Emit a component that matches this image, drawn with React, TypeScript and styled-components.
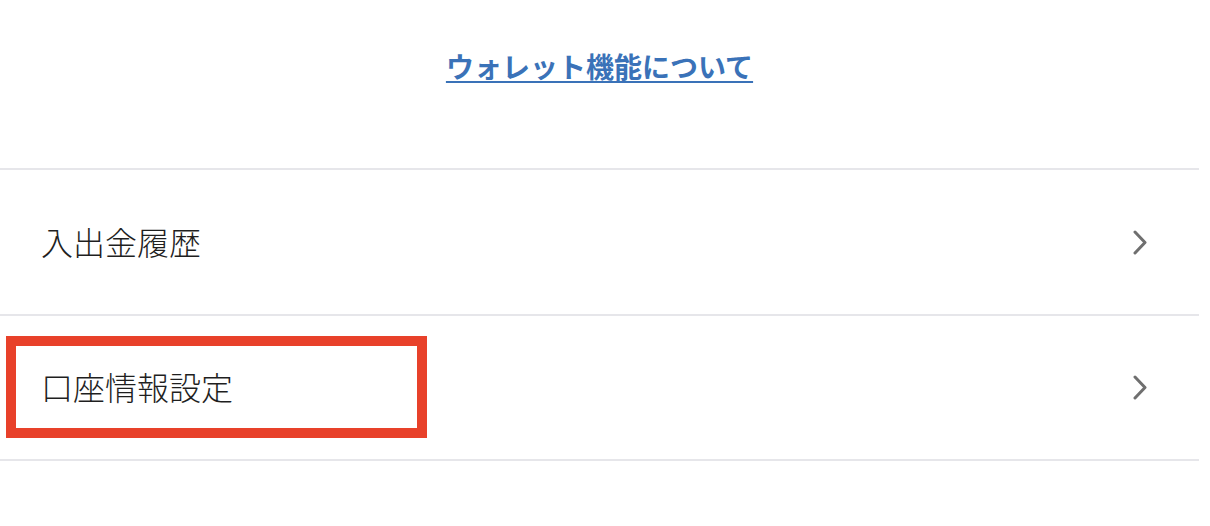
import React, {FC} from 'react';
import styled, {createGlobalStyle} from 'styled-components';

const GlobalStyle = createGlobalStyle`
	html, body {
		margin: 0;
		padding: 0;
		background: #ffffff;
	}
	body {
		font-family: "Noto Sans CJK JP", "Noto Sans", sans-serif;
		color: #2f2f2f;
	}
`;

interface MenuItemProps {
	label: string
	highlighted?: boolean
}

const Chevron: FC = () => (
	<svg width="14" height="25" viewBox="0 0 14 25" fill="none">
		<polyline points="2,2 12,12.5 2,23" stroke="#6f6f6f" strokeWidth="3" strokeLinecap="round" strokeLinejoin="round"/>
	</svg>
);

const MenuItem: FC<MenuItemProps> = ({label, highlighted}) => (
	<Row>
		<Label>{label}</Label>
		<Chevron/>
		{highlighted && <Highlight/>}
	</Row>
);

export default function App() {
	return (
		<Page>
			<GlobalStyle/>
			<Header>
				<WalletLink href="#">ウォレット機能について</WalletLink>
			</Header>
			<List>
				<MenuItem label="入出金履歴"/>
				<MenuItem label="口座情報設定" highlighted/>
			</List>
		</Page>
	);
}

const Page = styled.div`
	width: 1199px;
	height: 526px;
	background: #ffffff;
`;

const Header = styled.div`
	height: 168px;
	box-sizing: border-box;
	padding-top: 50px;
	display: flex;
	justify-content: center;
	align-items: flex-start;
`;

const WalletLink = styled.a`
	font-size: 28px;
	line-height: 32px;
	font-weight: 700;
	color: #3a72b8;
	text-decoration: underline;
	text-decoration-thickness: 2px;
	text-underline-offset: 3px;
	letter-spacing: 0;
`;

const List = styled.div`
	display: flex;
	flex-direction: column;
	border-top: 2px solid #e6e6ea;
`;

const Row = styled.div`
	position: relative;
	height: 144px;
	display: flex;
	align-items: center;
	justify-content: space-between;
	padding: 0 52px 0 41px;
	border-bottom: 2px solid #e6e6ea;

	&:last-child {
		height: 143px;
	}
`;

const Label = styled.span`
	font-size: 32px;
	line-height: 1;
	font-weight: 300;
	color: #1f1f1f;
	margin-bottom: 3px;
`;

const Highlight = styled.div`
	position: absolute;
	left: 6px;
	top: 20px;
	width: 421px;
	height: 102px;
	box-sizing: border-box;
	border: 10px solid #e8412a;
	pointer-events: none;
`;
